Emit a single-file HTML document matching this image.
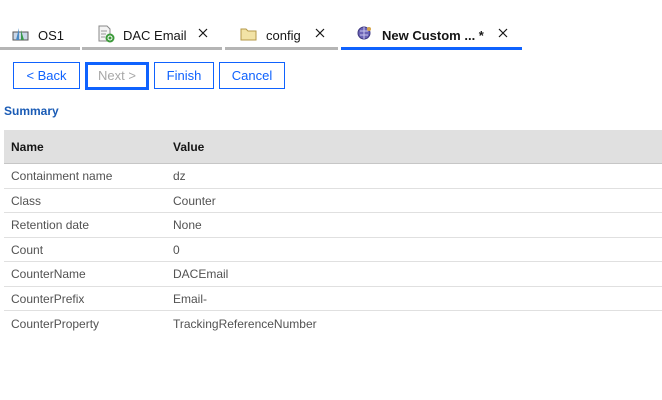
<!DOCTYPE html>
<html><head><style>
body{margin:0;width:662px;height:400px;background:#fff;font-family:"Liberation Sans",sans-serif;position:relative;overflow:hidden}
.tab{position:absolute;top:20px;height:30px;font-size:13px;color:#161616}
.tab .u{position:absolute;left:0;right:0;top:27px;height:3px;background:#b5b5b5}
.tab .l{position:absolute;top:8px}
.x{position:absolute;top:8px}
.btn{position:absolute;top:62px;height:25px;border:1px solid #0f62fe;color:#0f62fe;font-size:13px;text-align:center;line-height:25px;box-sizing:content-box}
table{position:absolute;left:4px;top:130px;width:658px;border-collapse:collapse;font-size:12px;color:#525252}
th{background:#e0e0e0;text-align:left;height:33px;padding:0 7px;font-weight:bold;color:#161616;border-bottom:1px solid #c6c6c6}
td{height:23.5px;padding:1px 7px 0;border-bottom:1px solid #e0e0e0;box-sizing:border-box}
</style></head><body>
<div class="tab" style="left:0;width:80px"><div class="u"></div>
<svg style="position:absolute;left:12px;top:7px" width="18" height="15"><rect x="1" y="5" width="15" height="8" fill="#c9d7e8" stroke="#555"/><path d="M7 1 L7 13 L4 13 Z" fill="#4a8ac4"/><path d="M9 3 L12 13 L9 13Z" fill="#3a9a4a"/></svg>
<span class="l" style="left:38px">OS1</span></div>
<div class="tab" style="left:82px;width:140px"><div class="u"></div>
<svg style="position:absolute;left:16px;top:5px" width="18" height="18"><path d="M1 1 H9 L12 4 V16 H1Z" fill="#f4f4f4" stroke="#888"/><path d="M3 6H9M3 9H8M3 12H7" stroke="#999"/><circle cx="12" cy="13" r="4.5" fill="#3c9a3a"/><circle cx="12" cy="13" r="2" fill="none" stroke="#fff"/></svg>
<span class="l" style="left:41px">DAC Email</span><svg class="x" style="left:116px" width="10" height="10"><path d="M1 1L9 9M9 1L1 9" stroke="#161616" stroke-width="1.2"/></svg></div>
<div class="tab" style="left:225px;width:113px"><div class="u"></div>
<svg style="position:absolute;left:15px;top:7px" width="18" height="14"><path d="M1 2H6L8 4H16V13H1Z" fill="#f2e3a6" stroke="#b59a4a"/></svg>
<span class="l" style="left:41px">config</span><svg class="x" style="left:90px" width="10" height="10"><path d="M1 1L9 9M9 1L1 9" stroke="#161616" stroke-width="1.2"/></svg></div>
<div class="tab" style="left:341px;width:181px;font-weight:bold"><div class="u" style="background:#0f62fe"></div>
<svg style="position:absolute;left:16px;top:5px" width="16" height="16"><circle cx="7" cy="8" r="6" fill="#6b63b5" stroke="#3e3880"/><path d="M3 6H11M3 10H11M7 2V14" stroke="#c8c4ee"/><circle cx="12" cy="4" r="2" fill="#d6a64a"/></svg>
<span class="l" style="left:41px">New Custom ... *</span><svg class="x" style="left:157px" width="10" height="10"><path d="M1 1L9 9M9 1L1 9" stroke="#161616" stroke-width="1.2"/></svg></div>

<div class="btn" style="left:13px;width:65px">&lt; Back</div>
<div class="btn" style="left:85px;width:58px;height:22px;border:3px solid #0f62fe;color:#a8a8a8;line-height:22px">Next &gt;</div>
<div class="btn" style="left:154px;width:58px">Finish</div>
<div class="btn" style="left:219px;width:64px">Cancel</div>
<div style="position:absolute;left:4px;top:104px;font-size:12px;font-weight:bold;color:#1a5bb5">Summary</div>
<table>
<tr><th style="width:148px">Name</th><th>Value</th></tr>
<tr><td style="height:24.5px">Containment name</td><td>dz</td></tr>
<tr><td style="height:24.5px">Class</td><td>Counter</td></tr>
<tr><td style="height:24.5px">Retention date</td><td>None</td></tr>
<tr><td style="height:24.5px">Count</td><td>0</td></tr>
<tr><td style="height:24.5px">CounterName</td><td>DACEmail</td></tr>
<tr><td style="height:24.5px">CounterPrefix</td><td>Email-</td></tr>
<tr><td style="border:0;height:24.5px">CounterProperty</td><td style="border:0">TrackingReferenceNumber</td></tr>
</table>
</body></html>
